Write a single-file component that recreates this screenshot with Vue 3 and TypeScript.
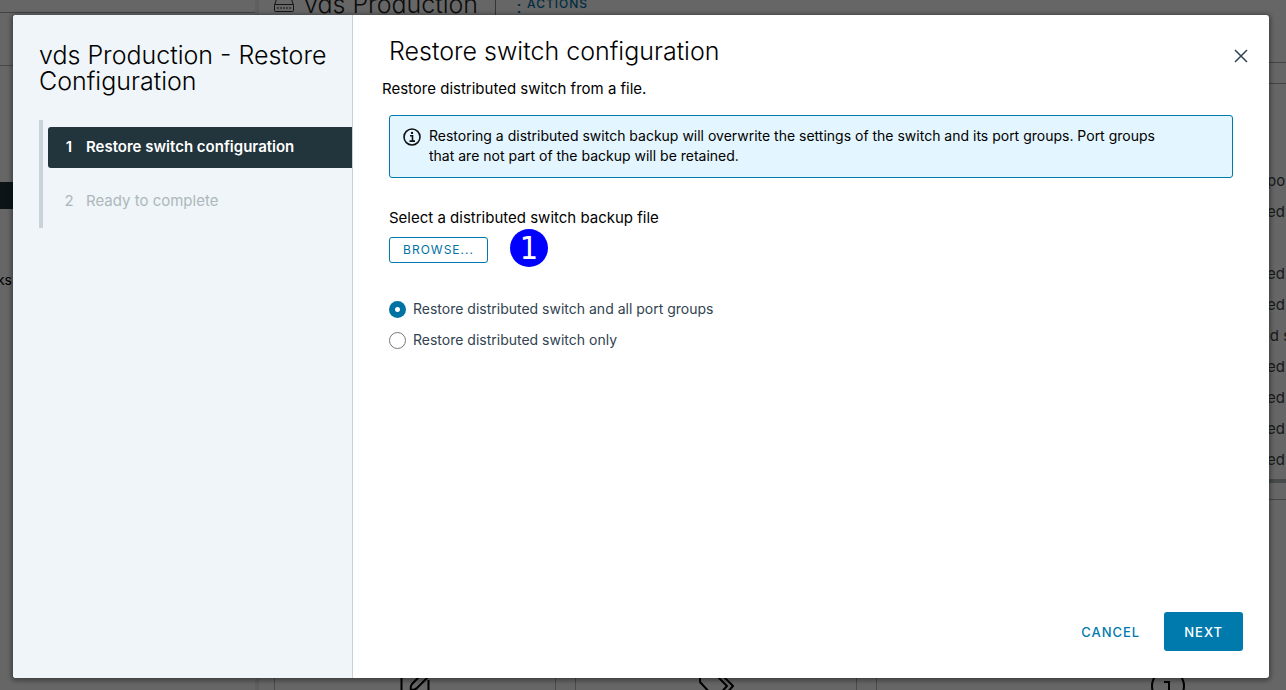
<script setup lang="ts">
import { ref } from 'vue'

interface Step {
  number: number
  label: string
}

interface RestoreOption {
  value: string
  label: string
}

const steps: Step[] = [
  { number: 1, label: 'Restore switch configuration' },
  { number: 2, label: 'Ready to complete' },
]

const options: RestoreOption[] = [
  { value: 'all', label: 'Restore distributed switch and all port groups' },
  { value: 'switch', label: 'Restore distributed switch only' },
]

const activeStep = ref(1)
const restoreMode = ref('all')

const properties: string[] = ['po', 'ed', '', 'ed', 'ed', 'ed s', 'ed', 'ed', 'ed', 'ed']
</script>

<template>
  <div class="screen">
    <div class="app" aria-hidden="true">
      <div class="navigator">
        <div class="nav-top"></div>
        <div class="nav-tabs"></div>
        <div class="nav-space"></div>
        <div class="nav-selected"></div>
        <div class="nav-item">ks</div>
      </div>
      <div class="splitter"></div>
      <div class="workspace">
        <div class="object-bar">
          <svg class="switch-icon" viewBox="0 0 22 18">
            <path d="M1.500 10.500L4 2.500H18L20.500 10.500V15.500Q20.500 16.500 19.500 16.500H2.500Q1.500 16.500 1.500 15.500ZM1.500 9.500H20.500M5 12v2M8 12v2M11 12v2M14 12v2M17 12v2" />
          </svg>
          <span class="object-name">vds Production</span>
          <span class="object-actions"><span class="dots">⋮</span>ACTIONS</span>
        </div>
        <div class="object-tabs"></div>
        <div class="properties">
          <div v-for="(text, i) in properties" :key="i" class="property" :class="{ long: text === 'ed s' }">{{ text }}</div>
        </div>
        <div class="scrollbar"></div>
        <div class="panel-line"></div>
        <div class="cards">
          <div class="card">
            <svg class="card-icon" viewBox="0 0 36 36"><path d="M4.500 0V34H31.500V7M22 4L15 11Q13 14 14 17Q18 17 20 15L31 4" /></svg>
          </div>
          <div class="card">
            <svg class="card-icon" viewBox="0 0 36 36"><path d="M2 0V9L14 22M19 3L29 13L20 23M25 3L35 13L26 23" /></svg>
          </div>
          <div class="card wide">
            <svg class="card-icon" viewBox="0 0 36 36"><circle cx="18" cy="13" r="16" /><path d="M14 9H19V22M14 22H24" /></svg>
          </div>
        </div>
      </div>
    </div>

    <div class="backdrop"></div>

    <div class="wizard" role="dialog" aria-modal="true" aria-labelledby="wizard-title">
      <aside class="sidebar">
        <h1 id="wizard-title" class="wizard-title">vds Production - Restore Configuration</h1>
        <nav class="steps">
          <button
            v-for="step in steps"
            :key="step.number"
            type="button"
            class="step"
            :class="{ active: step.number === activeStep }"
            :disabled="step.number > activeStep"
          >
            <span class="step-number">{{ step.number }}</span>
            <span>{{ step.label }}</span>
          </button>
        </nav>
      </aside>

      <main class="page">
        <header class="page-header">
          <h2 class="page-title">Restore switch configuration</h2>
          <button type="button" class="close" aria-label="Close">
            <svg viewBox="0 0 14 14"><path d="M1 1L13 13M13 1L1 13" /></svg>
          </button>
        </header>
        <p class="subtitle">Restore distributed switch from a file.</p>

        <div class="content">
          <div class="alert" role="note">
            <svg class="alert-icon" viewBox="0 0 18 18">
              <circle cx="9" cy="9" r="8" />
              <path d="M7 7.700H9.500V13M6.500 13.100H12" />
              <circle class="dot" cx="9" cy="4.900" r="1.200" />
            </svg>
            <span>Restoring a distributed switch backup will overwrite the settings of the switch and its port groups. Port groups that are not part of the backup will be retained.</span>
          </div>

          <label class="file-label" for="browse">Select a distributed switch backup file</label>
          <div class="file-row">
            <button id="browse" type="button" class="browse">BROWSE...</button>
            <span class="marker">1</span>
          </div>

          <div class="options" role="radiogroup" aria-label="Restore mode">
            <label v-for="option in options" :key="option.value" class="option" :for="'mode-' + option.value">
              <input :id="'mode-' + option.value" v-model="restoreMode" type="radio" name="mode" :value="option.value" />
              <span>{{ option.label }}</span>
            </label>
          </div>
        </div>

        <footer class="actions">
          <button type="button" class="cancel">CANCEL</button>
          <button type="button" class="next">NEXT</button>
        </footer>
      </main>
    </div>
  </div>
</template>

<style>
html,
body {
  margin: 0;
  overflow: hidden;
}
</style>

<style scoped>
* {
  box-sizing: border-box;
}

.screen {
  position: relative;
  height: 100vh;
  overflow: hidden;
  font-family: Inter, "Open Sans", sans-serif;
  font-size: 14px;
  line-height: 20px;
  color: #000;
  background: #fff;
}

button {
  font-family: inherit;
  cursor: pointer;
}

.app {
  display: flex;
  height: 100%;
}

.navigator {
  flex: 0 0 255px;
}

.nav-top {
  height: 13px;
  border-bottom: 1px solid #a8a8a8;
}

.nav-tabs {
  height: 53px;
  border-bottom: 1px solid #b4b4b4;
}

.nav-space {
  height: 116px;
}

.nav-selected {
  height: 27px;
  background: #22343c;
}

.nav-item {
  width: 12px;
  margin-top: 61px;
  display: flex;
  justify-content: flex-end;
}

.splitter {
  flex: 0 0 4px;
  background: #eee;
}

.workspace {
  flex: 1;
  min-width: 0;
  display: flex;
  flex-direction: column;
}

.object-bar {
  display: flex;
  align-items: flex-start;
  height: 63px;
  padding-left: 14px;
  border-bottom: 1px solid #a8a8a8;
}

.switch-icon {
  width: 22px;
  height: 18px;
  margin-top: -5px;
  fill: none;
  stroke: #333;
}

.object-name {
  height: 30px;
  margin: -11px 0 0 9px;
  padding-right: 17px;
  border-right: 1px solid #888;
  font-size: 25px;
  font-weight: 300;
  line-height: 30px;
  color: #222;
}

.object-actions {
  display: flex;
  margin: -6px 0 0 13px;
  font-size: 12px;
  font-weight: 500;
  letter-spacing: 1px;
  color: #0072a3;
}

.dots {
  width: 18px;
  font-size: 20px;
}

.object-tabs {
  height: 21px;
  border-bottom: 1px solid #a8a8a8;
}

.properties {
  margin-top: 81px;
  align-self: flex-end;
  width: 19px;
}

.property {
  height: 31px;
  line-height: 31px;
  font-size: 15px;
  white-space: nowrap;
  color: #444;
}

.long {
  margin-left: -6px;
}

.scrollbar {
  height: 4px;
  margin-top: 4px;
  background: #b0b8bc;
}

.panel-line {
  height: 17px;
  border-bottom: 1px solid #b0b0b0;
}

.cards {
  flex: 1;
  display: flex;
  gap: 19px;
  padding-left: 15px;
}

.card {
  flex: 0 0 282px;
  display: flex;
  align-items: flex-end;
  justify-content: center;
  border: 1px solid #bbb;
  border-width: 0 1px;
}

.wide {
  flex: 1;
  padding-left: 172px;
  border-right: 0;
}

.card-icon {
  width: 36px;
  height: 36px;
  margin-bottom: -19px;
  fill: none;
  stroke: #000;
  stroke-width: 2;
}

.backdrop {
  position: absolute;
  inset: 0;
  background: rgba(0, 0, 0, 0.6);
}

.wizard {
  position: absolute;
  inset: 15px 17px 12px 13px;
  display: flex;
  overflow: hidden;
  border-radius: 3px;
  background: #fff;
  box-shadow: 0 1px 4px 2px rgba(0, 0, 0, 0.35);
}

.sidebar {
  flex: 0 0 340px;
  padding: 27px 0 0 26px;
  border-right: 1px solid #c6d1dc;
  background: #eff5f8;
}

.wizard-title {
  margin: 0;
  padding-right: 24px;
  font-size: 25px;
  font-weight: 300;
  line-height: 26px;
}

.steps {
  display: flex;
  flex-direction: column;
  gap: 13px;
  margin-top: 26px;
  padding: 7px 0 6px 5px;
  border-left: 4px solid #c9d3d8;
}

.step {
  display: flex;
  align-items: center;
  gap: 12px;
  height: 41px;
  padding: 0 0 2px 16px;
  border: 0;
  border-radius: 3px 0 0 3px;
  background: transparent;
  font-size: 15px;
  line-height: 20px;
  color: #aeb8bc;
}

.step-number {
  width: 10px;
  text-align: center;
}

.step.active {
  background: #22343c;
  color: #fff;
  font-weight: 600;
}

.page {
  flex: 1;
  min-width: 0;
  display: flex;
  flex-direction: column;
  padding: 21px 26px 27px 29px;
}

.page-header {
  display: flex;
  justify-content: space-between;
  height: 30px;
  padding-left: 7px;
}

.page-title {
  margin: 0;
  font-size: 25px;
  font-weight: 300;
  line-height: 30px;
}

.close {
  width: 24px;
  height: 24px;
  margin: 8px -10px 0 0;
  padding: 5px;
  border: 0;
  background: none;
}

.close svg {
  display: block;
  width: 14px;
  height: 14px;
  fill: none;
  stroke: #314351;
  stroke-width: 1.5;
}

.subtitle {
  margin: 13px 0 16px;
  font-size: 15px;
}

.content {
  padding: 0 10px 0 7px;
}

.alert {
  display: flex;
  gap: 8px;
  padding: 10px 52px 11px 13px;
  border: 1px solid #0079ad;
  border-radius: 3px;
  background: #e3f5fe;
}

.alert-icon {
  flex: none;
  width: 18px;
  height: 18px;
  margin-top: 2px;
  fill: none;
  stroke: #111;
  stroke-width: 1.6;
}

.dot {
  fill: #111;
  stroke: none;
}

.file-label {
  display: block;
  margin-top: 30px;
  font-size: 15px;
}

.file-row {
  position: relative;
  display: flex;
  margin-top: 9px;
}

.browse {
  width: 99px;
  height: 26px;
  padding: 0 0 2px;
  border: 1px solid #0079ad;
  border-radius: 3px;
  background: #fff;
  font-size: 12px;
  letter-spacing: 1px;
  color: #0072a3;
}

.marker {
  position: absolute;
  left: 121px;
  top: -8px;
  width: 38px;
  height: 38px;
  border-radius: 50%;
  background: #00f;
  font-family: "DejaVu Sans Condensed", "DejaVu Sans", sans-serif;
  font-size: 32px;
  line-height: 38px;
  text-align: center;
  color: #fff;
}

.options {
  display: flex;
  flex-direction: column;
  gap: 11px;
  margin-top: 36px;
}

.option {
  display: flex;
  align-items: center;
  gap: 7px;
  color: #314351;
}

.option input {
  appearance: none;
  width: 17px;
  height: 17px;
  margin: 0;
  border: 1px solid #777;
  border-radius: 50%;
  background: #fff;
}

.option input:checked {
  border: 0;
  background: radial-gradient(circle, #fff 2px, #0072a3 3px);
}

.actions {
  display: flex;
  justify-content: flex-end;
  gap: 4px;
  margin-top: auto;
}

.cancel,
.next {
  height: 39px;
  padding: 0 20px;
  border: 0;
  border-radius: 3px;
  font-size: 13px;
  font-weight: 500;
  letter-spacing: 1px;
}

.cancel {
  background: none;
  color: #0079ad;
}

.next {
  background: #0079ad;
  color: #fff;
}
</style>
